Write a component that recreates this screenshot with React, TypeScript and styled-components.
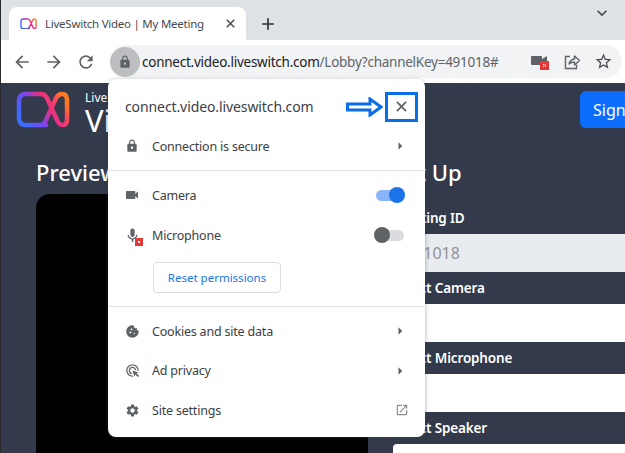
import React from "react";
import styled, {createGlobalStyle} from "styled-components";
import {
    MdAdd, MdAdsClick, MdArrowBack, MdArrowForward, MdArrowRight, MdCookie, MdExpandMore,
    MdLock, MdMic, MdOpenInNew, MdRefresh, MdSettings, MdStarBorder, MdVideocam
} from "react-icons/md";

const UI_FONT = `"Noto Sans", "Open Sans", sans-serif`;

const Logo = ({width, id}: { width: number; id: string }) => (
    <svg width={width} height={width * 38 / 54} viewBox="0 0 54 38" fill="none">
        <defs>
            <linearGradient id={id} x1="0" y1="0.7" x2="1" y2="0.3">
                <stop offset="0" stopColor="#3b6cff"/>
                <stop offset="0.35" stopColor="#7a45f0"/>
                <stop offset="0.62" stopColor="#e8307f"/>
                <stop offset="0.8" stopColor="#f5406a"/>
                <stop offset="1" stopColor="#ff7a22"/>
            </linearGradient>
        </defs>
        <path
            d="M30 34H10Q3 34 3 27V10Q3 3 10 3H25Q29 3 31 7L41 29Q43 34 47 34Q51 34 51 29V9Q51 3 46 3Q42 3 40 7L30 29Q28 34 24 34"
            stroke={`url(#${id})`} strokeWidth="4.5" strokeLinecap="round"/>
    </svg>
);

const CloseIcon = ({size, color}: { size: number; color: string }) => (
    <svg width={size} height={size} viewBox="0 0 12 12" fill="none" stroke={color} strokeWidth="1.9">
        <path d="M1 1L11 11M11 1L1 11"/>
    </svg>
);

const ShareIcon = () => (
    <svg width="18" height="18" viewBox="0 0 18 18" fill="none" stroke="#5f6368" strokeWidth="1.4">
        <path d="M7 3.5H2.5V15.5H13.5V11.5"/>
        <path d="M6 11Q7 6.5 11.5 6V3L16.5 7.5L11.5 12V9Q8 9 6 11Z" strokeLinejoin="round"/>
    </svg>
);

const BlockedCamera = () => (
    <svg width="20" height="18" viewBox="0 0 20 18">
        <rect x="1" y="3" width="11" height="9" rx="1" fill="#5f6368"/>
        <path d="M12 6L17 3V12L12 9Z" fill="#5f6368"/>
        <rect x="10" y="8" width="9" height="9" fill="#e53935"/>
        <path d="M13 11L16 14M16 11L13 14" stroke="#fff" strokeWidth="1"/>
    </svg>
);

const BlockedMic = () => (
    <MicWrap>
        <MdMic size={17} color="#5f6368"/>
        <Badge/>
    </MicWrap>
);

export default function App() {
    return (
        <Page>
            <GlobalStyle/>
            <TabStrip>
                <Tab>
                    <Logo width={17} id="favicon"/>
                    <TabTitle>LiveSwitch Video | My Meeting</TabTitle>
                    <CloseIcon size={9} color="#45494e"/>
                </Tab>
                <NewTab><MdAdd size={20} color="#303338"/></NewTab>
                <TabSearch><MdExpandMore size={20} color="#45494e"/></TabSearch>
            </TabStrip>
            <Toolbar>
                <NavButtons>
                    <MdArrowBack size={20}/>
                    <MdArrowForward size={20}/>
                    <MdRefresh size={20}/>
                </NavButtons>
                <Omnibox>
                    <LockCircle><MdLock size={14} color="#5f6368"/></LockCircle>
                    <Url>connect.video.liveswitch.com<UrlRest>/Lobby?channelKey=491018#</UrlRest></Url>
                    <OmniIcons>
                        <BlockedCamera/>
                        <ShareIcon/>
                        <MdStarBorder size={19} color="#4a4d52"/>
                    </OmniIcons>
                </Omnibox>
            </Toolbar>
            <AppArea>
                <Header>
                    <Brand>
                        <Logo width={54} id="logo"/>
                        <BrandText>
                            <BrandSmall>LiveSwitch</BrandSmall>
                            <BrandBig>Video</BrandBig>
                        </BrandText>
                    </Brand>
                    <SignIn>Sign In</SignIn>
                </Header>
                <Body>
                    <PreviewColumn>
                        <Heading>Preview</Heading>
                        <VideoPanel/>
                    </PreviewColumn>
                    <FormColumn>
                        <Heading>Set Up</Heading>
                        <Fields>
                            <FieldLabel>Meeting ID</FieldLabel>
                            <Input $disabled>491018</Input>
                            <FieldLabel>Select Camera</FieldLabel>
                            <Input/>
                            <FieldLabel>Select Microphone</FieldLabel>
                            <Input/>
                            <FieldLabel>Select Speaker</FieldLabel>
                            <Input/>
                        </Fields>
                    </FormColumn>
                </Body>
            </AppArea>

            <Popup>
                <TitleRow>
                    <SiteName>connect.video.liveswitch.com</SiteName>
                    <CloseHighlight><CloseIcon size={11} color="#5f6368"/></CloseHighlight>
                    <Callout viewBox="0 0 37 20" width="37" height="20" fill="#fff" stroke="#0a6ee8" strokeWidth="3">
                        <path d="M1.5 7H24V2L35 10L24 18V13H1.5Z" strokeLinejoin="miter"/>
                    </Callout>
                </TitleRow>
                <Row>
                    <IconSlot><MdLock size={14} color="#5f6368"/></IconSlot>
                    <RowLabel>Connection is secure</RowLabel>
                    <TrailingArrow><MdArrowRight size={18} color="#5f6368"/></TrailingArrow>
                </Row>
                <Divider/>
                <Row>
                    <IconSlot><MdVideocam size={16} color="#5f6368"/></IconSlot>
                    <RowLabel>Camera</RowLabel>
                    <Toggle $on/>
                </Row>
                <Row>
                    <IconSlot><BlockedMic/></IconSlot>
                    <RowLabel>Microphone</RowLabel>
                    <Toggle/>
                </Row>
                <ResetButton>Reset permissions</ResetButton>
                <Divider/>
                <Row $short>
                    <IconSlot><MdCookie size={15} color="#5f6368"/></IconSlot>
                    <RowLabel>Cookies and site data</RowLabel>
                    <TrailingArrow><MdArrowRight size={18} color="#5f6368"/></TrailingArrow>
                </Row>
                <Row $short>
                    <IconSlot><MdAdsClick size={15} color="#5f6368"/></IconSlot>
                    <RowLabel>Ad privacy</RowLabel>
                    <TrailingArrow><MdArrowRight size={18} color="#5f6368"/></TrailingArrow>
                </Row>
                <Row $short>
                    <IconSlot><MdSettings size={15} color="#5f6368"/></IconSlot>
                    <RowLabel>Site settings</RowLabel>
                    <TrailingArrow><MdOpenInNew size={14} color="#8a8d91"/></TrailingArrow>
                </Row>
            </Popup>
        </Page>
    )
}

const GlobalStyle = createGlobalStyle`
  html, body {
    margin: 0;
    padding: 0;
    background: #fff;
  }
`

const Page = styled.div`
  position: relative;
  width: 625px;
  height: 453px;
  overflow: hidden;
  display: flex;
  flex-direction: column;
  font-family: ${UI_FONT};
  border-left: 1px solid #2b2b2d;
  box-sizing: border-box;
`

const TabStrip = styled.div`
  height: 40px;
  flex: none;
  display: flex;
  align-items: flex-end;
  padding-left: 8px;
  background: #dee1e6;
`

const Tab = styled.div`
  width: 237px;
  height: 33px;
  box-sizing: border-box;
  display: flex;
  align-items: center;
  padding: 0 11px 0 11px;
  background: #fff;
  border-radius: 8px 8px 0 0;
`

const TabTitle = styled.span`
  flex: 1;
  margin-left: 8px;
  font-size: 11.5px;
  letter-spacing: -0.25px;
  color: #45494e;
  white-space: nowrap;
`

const NewTab = styled.div`
  display: flex;
  margin: 0 0 6px 12px;
`

const TabSearch = styled.div`
  display: flex;
  align-self: flex-start;
  margin: 3px 13px 0 auto;
`

const Toolbar = styled.div`
  height: 43px;
  flex: none;
  display: flex;
  align-items: center;
  background: #fff;
`

const NavButtons = styled.div`
  width: 109px;
  flex: none;
  display: flex;
  gap: 12px;
  padding-left: 11px;
  box-sizing: border-box;
  color: #5f6368;
`

const Omnibox = styled.div`
  flex: 1;
  height: 33px;
  margin-right: 3px;
  display: flex;
  align-items: center;
  background: #f1f3f4;
  border-radius: 17px;
`

const LockCircle = styled.div`
  width: 30px;
  height: 30px;
  flex: none;
  display: flex;
  align-items: center;
  justify-content: center;
  border-radius: 50%;
  background: #bdbec0;
`

const Url = styled.div`
  flex: 1;
  margin-left: 2px;
  font-size: 13.5px;
  letter-spacing: -0.25px;
  color: #202124;
  white-space: nowrap;
`

const UrlRest = styled.span`
  color: #5f6368;
`

const OmniIcons = styled.div`
  display: flex;
  align-items: center;
  gap: 13px;
  padding-right: 9px;
`

const AppArea = styled.div`
  flex: 1;
  min-height: 0;
  background: #323a4b;
  color: #fff;
  overflow: hidden;
`

const Header = styled.div`
  display: flex;
  justify-content: space-between;
  align-items: flex-start;
  padding: 8px 0 0 15px;
`

const Brand = styled.div`
  display: flex;
  gap: 15px;
`

const BrandText = styled.div`
  display: flex;
  flex-direction: column;
`

const BrandSmall = styled.span`
  font-size: 12px;
  line-height: 14px;
`

const BrandBig = styled.span`
  font-size: 31px;
  line-height: 30px;
`

const SignIn = styled.div`
  width: 85px;
  height: 37px;
  flex: none;
  margin-right: -40px;
  padding-left: 13px;
  box-sizing: border-box;
  display: flex;
  align-items: center;
  font-size: 16px;
  background: #0d6efd;
  border-radius: 6px;
`

const Body = styled.div`
  display: grid;
  grid-template-columns: 332px 260px;
  gap: 25px;
  padding: 24px 0 0 35px;
`

const PreviewColumn = styled.div`
  display: flex;
  flex-direction: column;
`

const FormColumn = styled.div`
  display: flex;
  flex-direction: column;
`

const Heading = styled.div`
  font-size: 22px;
  line-height: 26px;
  font-weight: 500;
  white-space: nowrap;
`

const VideoPanel = styled.div`
  height: 300px;
  margin-top: 9px;
  background: #000;
  border-radius: 14px;
`

const Fields = styled.div`
  display: flex;
  flex-direction: column;
  margin-top: 17px;
`

const FieldLabel = styled.div`
  height: 32px;
  line-height: 32px;
  font-size: 13.5px;
  letter-spacing: -0.15px;
  font-weight: 600;
  white-space: nowrap;
`

const Input = styled.div<{ $disabled?: boolean }>`
  height: 38px;
  box-sizing: border-box;
  padding-left: 12px;
  font-size: 16px;
  line-height: 38px;
  color: #8f9398;
  background: ${({$disabled}) => ($disabled ? '#e9ecef' : '#fff')};
  border-radius: 4px;
`

const Popup = styled.div`
  position: absolute;
  top: 79px;
  left: 107px;
  width: 317px;
  height: 358px;
  box-sizing: border-box;
  padding-top: 8px;
  display: flex;
  flex-direction: column;
  background: #fff;
  border-radius: 8px;
  box-shadow: 0 1px 4px rgba(60, 64, 67, 0.45);
`

const TitleRow = styled.div`
  position: relative;
  height: 39px;
  flex: none;
  display: flex;
  align-items: center;
  justify-content: space-between;
  padding: 0 7px 0 17px;
`

const SiteName = styled.span`
  font-size: 14px;
  letter-spacing: -0.1px;
  color: #3c4043;
  white-space: nowrap;
`

const CloseHighlight = styled.div`
  width: 33px;
  height: 30px;
  box-sizing: border-box;
  display: flex;
  align-items: center;
  justify-content: center;
  border: 3px solid #0a6ee8;
`

const Callout = styled.svg`
  position: absolute;
  right: 42px;
  top: 10px;
`

const Row = styled.div<{ $short?: boolean }>`
  height: ${({$short}) => ($short ? '39.5px' : '40px')};
  flex: none;
  display: flex;
  align-items: center;
  padding: ${({$short}) => ($short ? '1px' : '0')} 18px 0 12px;
  box-sizing: border-box;
`

const IconSlot = styled.span`
  width: 24px;
  flex: none;
  display: flex;
  justify-content: center;
`

const TrailingArrow = styled.span`
  display: flex;
  margin-right: -2px;
`

const RowLabel = styled.span`
  flex: 1;
  margin-left: 8px;
  font-size: 12.5px;
  letter-spacing: -0.2px;
  color: #3c4043;
  white-space: nowrap;
`

const Divider = styled.div`
  height: 1px;
  flex: none;
  margin: 4px 0;
  background: #e3e4e6;
`

const MicWrap = styled.span`
  position: relative;
  display: flex;
  margin-left: 1px;
`

const Badge = styled.span`
  position: absolute;
  right: -2px;
  bottom: -2px;
  width: 8px;
  height: 8px;
  background: #e53935;

  &::after {
    content: "";
    position: absolute;
    top: 3px;
    left: 3px;
    width: 2px;
    height: 2px;
    background: #fff;
  }
`

const Toggle = styled.span<{ $on?: boolean }>`
  position: relative;
  width: 28px;
  height: 11px;
  margin-right: 3px;
  border-radius: 6px;
  background: ${({$on}) => ($on ? '#8ab4f8' : '#dadce0')};

  &::after {
    content: "";
    position: absolute;
    top: -2.5px;
    ${({$on}) => ($on ? 'right: -1px;' : 'left: -2px;')}
    width: 16px;
    height: 16px;
    border-radius: 50%;
    background: ${({$on}) => ($on ? '#1a73e8' : '#5f6368')};
  }
`

const ResetButton = styled.div`
  width: 128px;
  height: 31px;
  flex: none;
  margin: 7px 0 9px 45px;
  box-sizing: border-box;
  display: flex;
  align-items: center;
  justify-content: center;
  font-size: 11.5px;
  color: #1a73e8;
  border: 1px solid #dadce0;
  border-radius: 4px;
  white-space: nowrap;
`
